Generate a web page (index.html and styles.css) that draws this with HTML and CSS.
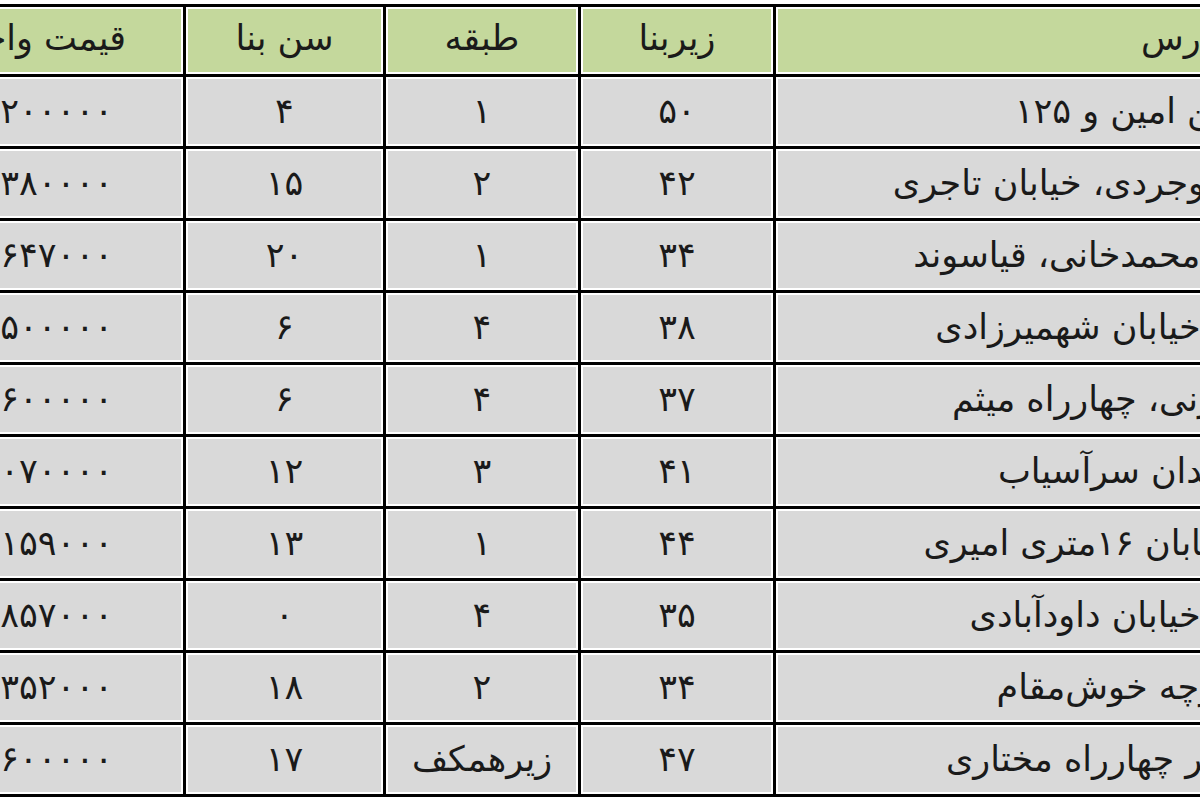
FILE: index.html
```html
<!DOCTYPE html>
<html lang="fa">
<head>
<meta charset="utf-8">
<title>جدول قیمت</title>
<link rel="stylesheet" href="styles.css">
</head>
<body>
<div class="frame">
<table class="grid" dir="rtl">
  <colgroup>
    <col class="c-addr">
    <col class="c-area">
    <col class="c-floor">
    <col class="c-age">
    <col class="c-price">
  </colgroup>
  <thead>
    <tr>
      <th class="addr">آدرس</th>
      <th>زیربنا</th>
      <th>طبقه</th>
      <th>سن بنا</th>
      <th class="price">قیمت واحد</th>
    </tr>
  </thead>
  <tbody>
    <tr><td class="addr">بین امین و ۱۲۵</td><td>۵۰</td><td>۱</td><td>۴</td><td class="price">۱۲۲۰۰۰۰۰</td></tr>
    <tr><td class="addr">بروجردی، خیابان تاجری</td><td>۴۲</td><td>۲</td><td>۱۵</td><td class="price">۱۳۳۸۰۰۰۰</td></tr>
    <tr><td class="addr">خ محمدخانی، قیاسوند</td><td>۳۴</td><td>۱</td><td>۲۰</td><td class="price">۱۱۶۴۷۰۰۰</td></tr>
    <tr><td class="addr">&nbsp;&nbsp;&nbsp;خیابان شهمیرزادی</td><td>۳۸</td><td>۴</td><td>۶</td><td class="price">۱۳۵۰۰۰۰۰</td></tr>
    <tr><td class="addr">قرنی، چهارراه میثم</td><td>۳۷</td><td>۴</td><td>۶</td><td class="price">۱۲۶۰۰۰۰۰</td></tr>
    <tr><td class="addr">میدان سرآسیاب</td><td>۴۱</td><td>۳</td><td>۱۲</td><td class="price">۱۰۰۷۰۰۰۰</td></tr>
    <tr><td class="addr">خیابان ۱۶متری امیری</td><td>۴۴</td><td>۱</td><td>۱۳</td><td class="price">۱۱۱۵۹۰۰۰</td></tr>
    <tr><td class="addr">&nbsp;&nbsp;&nbsp;خیابان داودآبادی</td><td>۳۵</td><td>۴</td><td>۰</td><td class="price">۱۴۸۵۷۰۰۰</td></tr>
    <tr><td class="addr">کوچه خوش‌مقام</td><td>۳۴</td><td>۲</td><td>۱۸</td><td class="price">۱۲۳۵۲۰۰۰</td></tr>
    <tr><td class="addr">سر چهارراه مختاری</td><td>۴۷</td><td>زیرهمکف</td><td>۱۷</td><td class="price">۱۰۶۰۰۰۰۰</td></tr>
  </tbody>
</table>
</div>
</body>
</html>
```

FILE: styles.css
```css
html, body {
  margin: 0;
  padding: 0;
  background: #ffffff;
}

body {
  width: 1200px;
  height: 800px;
  overflow: hidden;
}

.frame {
  padding-top: 4px;
  margin-left: -83px;
  width: 1326px;
}

.grid {
  table-layout: fixed;
  width: 1326px;
  border-collapse: separate;
  border-spacing: 3px;
  background: #000000;
  font-family: "DejaVu Sans", sans-serif;
  font-size: 35px;
  color: #1a1a1a;
}

.c-addr { width: 464px; }
.c-area { width: 192px; }
.c-floor { width: 192px; }
.c-age { width: 197px; }
.c-price { width: 263px; }

.grid th,
.grid td {
  border: 2px solid #ffffff;
  padding: 0;
  text-align: center;
  vertical-align: middle;
  white-space: nowrap;
  overflow: hidden;
  line-height: 1.1;
}

.grid th {
  height: 59px;
  padding-bottom: 4px;
  background: #c4d89c;
  font-weight: normal;
}

.grid td {
  height: 65px;
  background: #d9d9d9;
}

.grid td.price {
  text-align: right;
  padding-right: 68px;
}

.grid th.price {
  text-align: right;
  padding-right: 55px;
}

.grid td.addr {
  text-align: right;
  padding-right: 4px;
}

.grid th.addr {
  text-align: right;
  padding-right: 12px;
}
```
